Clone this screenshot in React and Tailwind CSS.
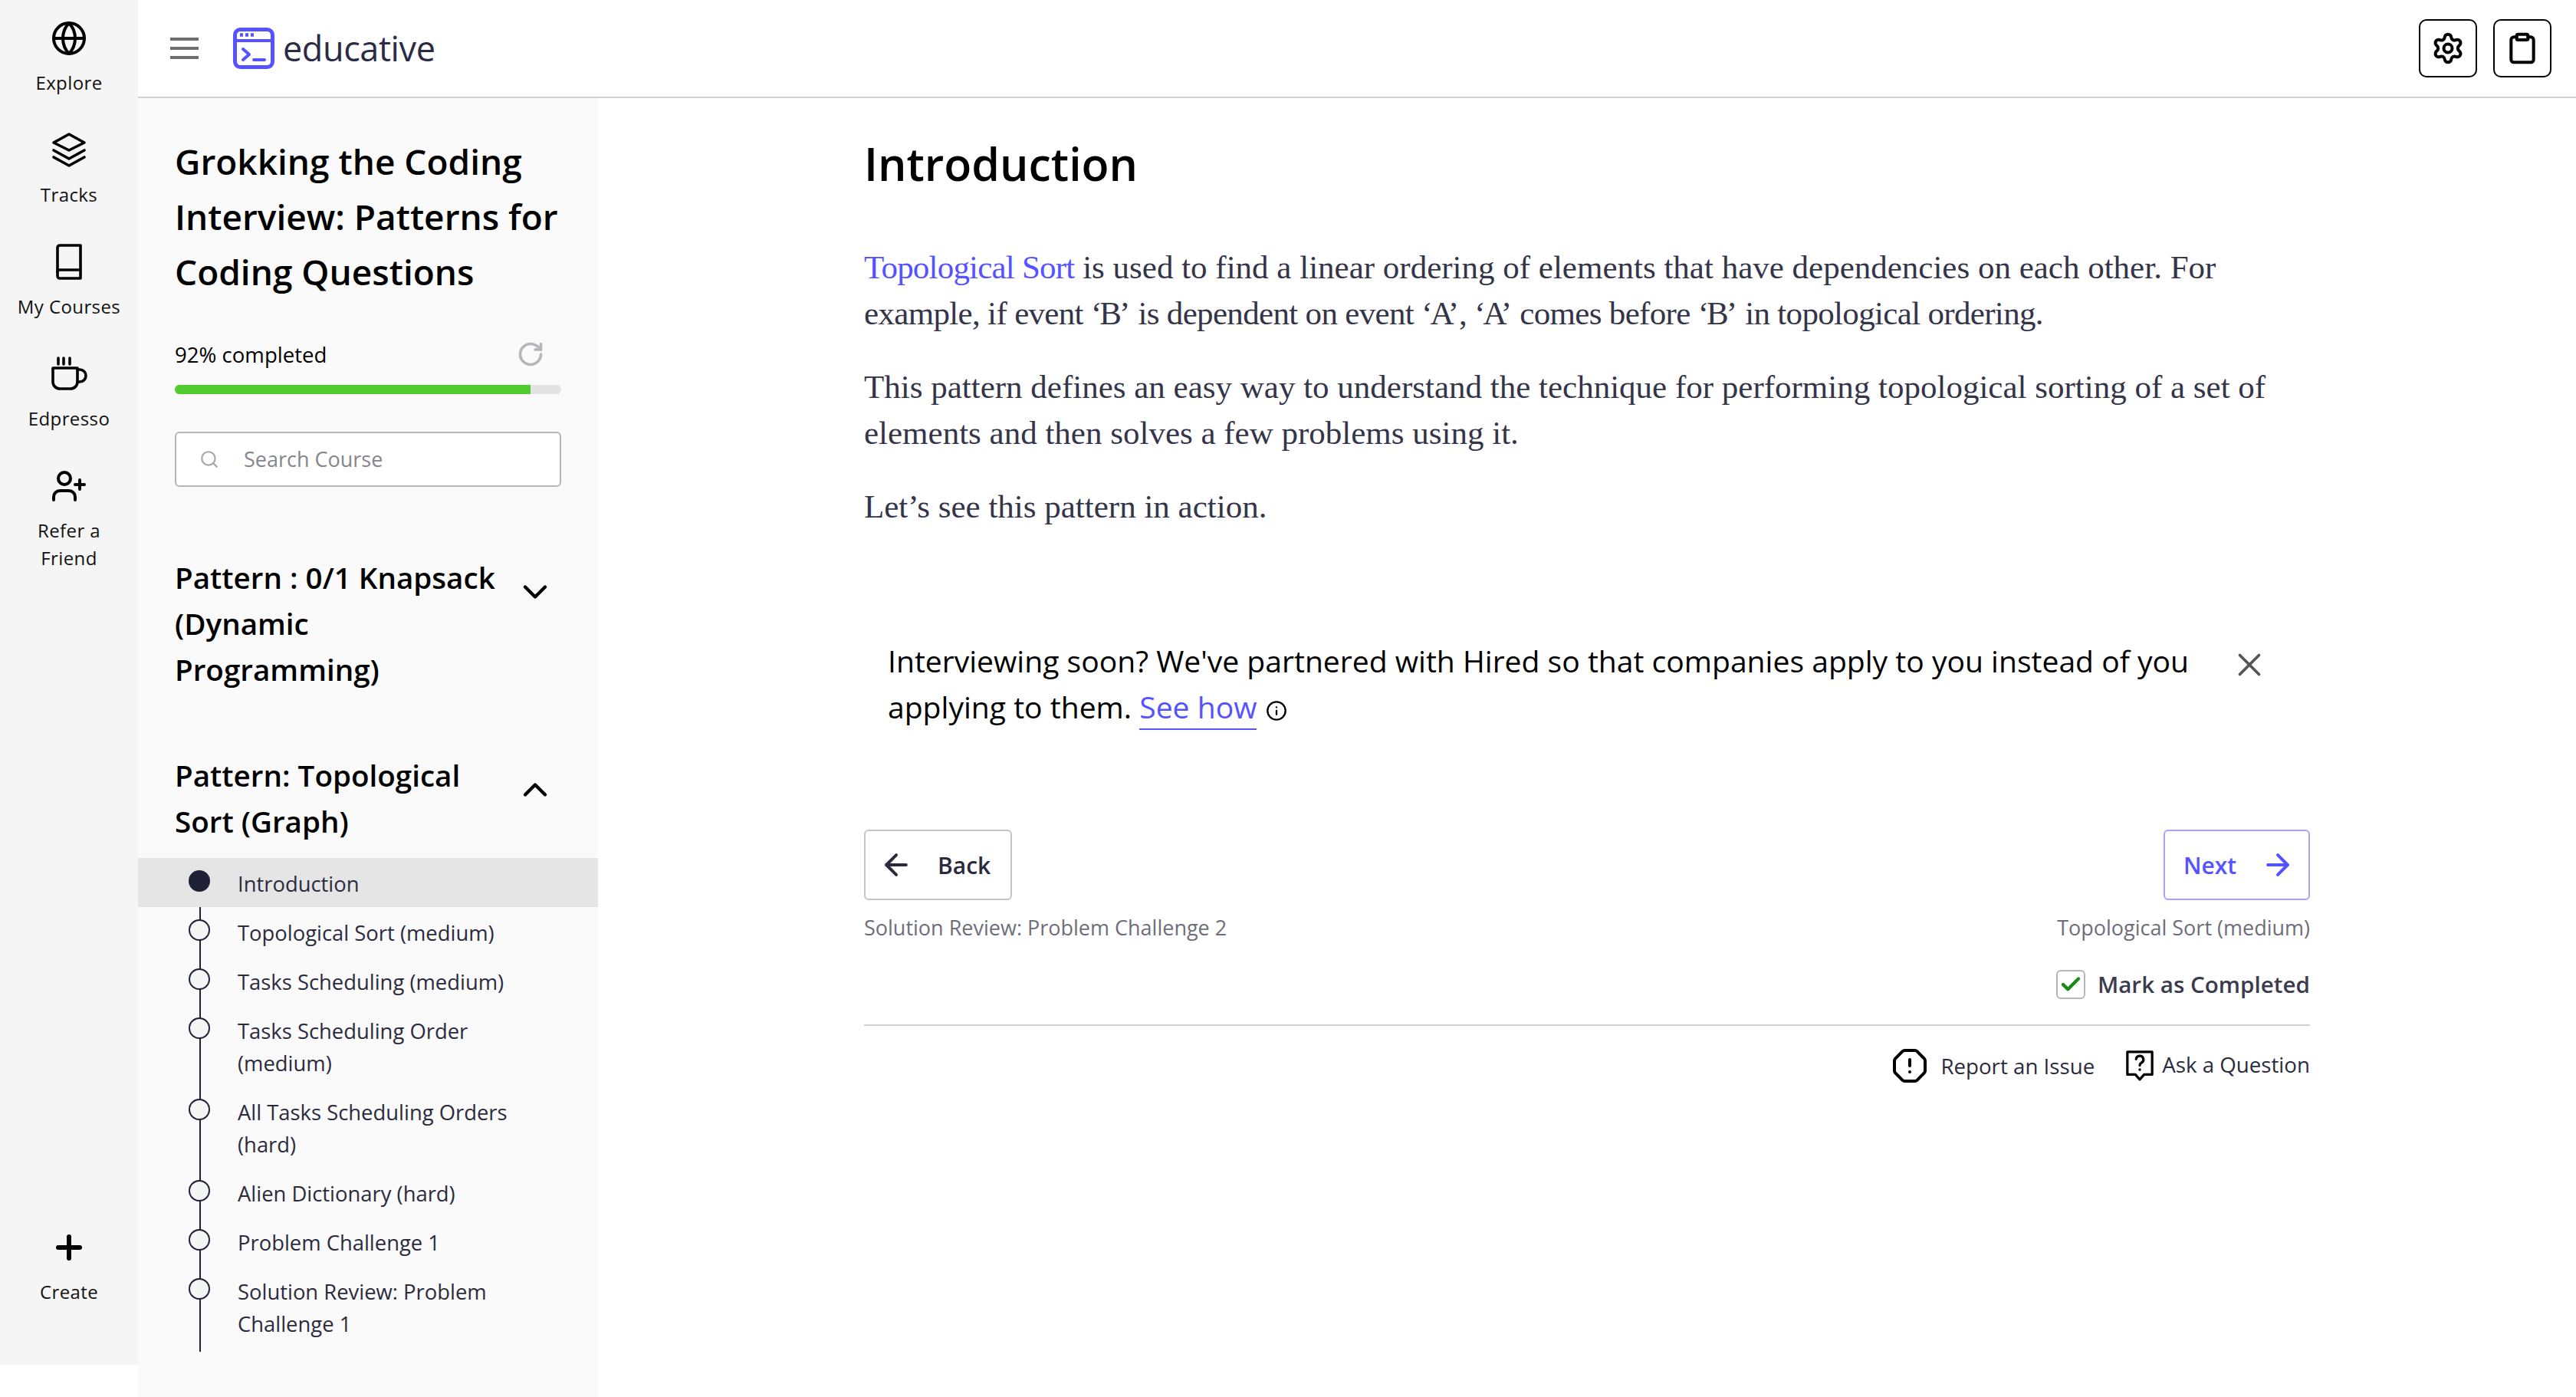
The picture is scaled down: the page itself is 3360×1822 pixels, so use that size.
import React from "react";
import {
  Globe, UserPlus, Plus, Settings, Clipboard, RotateCw, Search,
  ChevronDown, ChevronUp, ArrowLeft, ArrowRight, X, Info, Check, OctagonAlert,
} from "lucide-react";

const sans = "font-['Open_Sans',sans-serif]";

const LayersIcon = ({ className }) => (
  <svg viewBox="0 0 48 48" fill="none" stroke="currentColor" strokeWidth="3.6" strokeLinecap="round" strokeLinejoin="round" className={className}>
    <path d="M24 3l20 11-20 10L4 14z" />
    <path d="M4 24l20 11 20-11" />
    <path d="M4 33l20 11 20-11" />
  </svg>
);

const BookIcon = ({ className }) => (
  <svg viewBox="0 0 48 48" fill="none" stroke="currentColor" strokeWidth="3.6" strokeLinecap="round" strokeLinejoin="round" className={className}>
    <path d="M9 5a3 3 0 0 1 3-3h27v43H12a3 3 0 0 1-3-3z" />
    <path d="M9 37a3 3 0 0 1 3-3h27" />
  </svg>
);

const CupIcon = ({ className }) => (
  <svg viewBox="0 0 48 48" fill="none" stroke="currentColor" strokeWidth="3.6" strokeLinecap="round" strokeLinejoin="round" className={className}>
    <path d="M10 3v8M17 3v8M25 3v8" />
    <path d="M3 16h32v18a9 9 0 0 1-9 9H12a9 9 0 0 1-9-9z" />
    <path d="M35 18h3a8 8 0 0 1 0 16h-3" />
  </svg>
);

const AskIcon = ({ className }) => (
  <svg viewBox="0 0 40 44" fill="none" stroke="currentColor" strokeWidth="3.4" strokeLinejoin="round" strokeLinecap="round" className={className}>
    <path d="M3 3h34v31H26l-6 7-6-7H3z" />
    <path d="M15 13a5 5 0 1 1 7 5c-1.500 .8-2 1.500-2 3.500" />
    <path d="M20 27v.5" />
  </svg>
);

const Logo = () => (
  <svg viewBox="0 0 54 54" fill="none" className="w-[54px] h-[54px] shrink-0">
    <rect x="2.500" y="2.500" width="49" height="49" rx="7" stroke="#5553ff" strokeWidth="5" />
    <path d="M3 17h48" stroke="#5553ff" strokeWidth="4" />
    <path d="M9 9.500h4M16 9.500h4M23 9.500h4" stroke="#5553ff" strokeWidth="4.500" />
    <path d="M13 28l8 7-8 7" stroke="#5553ff" strokeWidth="4" strokeLinecap="round" strokeLinejoin="round" />
    <path d="M27 42h14" stroke="#5553ff" strokeWidth="4" strokeLinecap="round" />
  </svg>
);

function RailItem({ icon: Icon, label, stroke = 2, className = "" }) {
  return (
    <div className={`flex flex-col items-center ${className}`}>
      <Icon className="w-[48px] h-[48px] text-black" strokeWidth={stroke} />
      <span className={`mt-[16px] text-center text-[24px] leading-[36px] tracking-[0.4px] font-medium text-[#111] ${sans}`}>{label}</span>
    </div>
  );
}

const lessons = [
  { title: "Introduction", active: true },
  { title: "Topological Sort (medium)" },
  { title: "Tasks Scheduling (medium)" },
  { title: "Tasks Scheduling Order (medium)" },
  { title: "All Tasks Scheduling Orders (hard)" },
  { title: "Alien Dictionary (hard)" },
  { title: "Problem Challenge 1" },
  { title: "Solution Review: Problem Challenge 1" },
];

function LessonRow({ title, active }) {
  return (
    <div className={`relative pl-[130px] pr-[60px] pt-[13px] pb-[9px] text-[27.4px] leading-[42px] text-[#2b2b3d] ${active ? "bg-[#e5e5e5]" : ""}`}>
      <span className={`absolute left-[66px] top-[16px] w-[28px] h-[28px] rounded-full border-2 border-[#1f2137] ${active ? "bg-[#1f2137]" : "bg-[#f5f5f5]"}`} />
      {title}
    </div>
  );
}

const Q = ({ children }) => <span className="tracking-[-3px] mr-[3px]">{children}</span>;

export default function App() {
  return (
    <div className={`flex w-[3360px] h-[1822px] overflow-hidden bg-white ${sans}`}>
      {/* left rail */}
      <aside className="w-[180px] h-[1780px] shrink-0 bg-[#f5f5f5] flex flex-col pt-[26px] pb-[77px]">
        <RailItem icon={Globe} label="Explore" />
        <RailItem icon={LayersIcon} label="Tracks" className="mt-[46px]" />
        <RailItem icon={BookIcon} label="My Courses" className="mt-[46px]" />
        <RailItem icon={CupIcon} label="Edpresso" className="mt-[46px]" />
        <RailItem icon={UserPlus} label={<>Refer a<br />Friend</>} className="mt-[46px]" />
        <RailItem icon={Plus} stroke={3} label="Create" className="mt-auto" />
      </aside>

      <div className="flex-1 flex flex-col min-w-0">
        {/* top bar */}
        <header className="h-[126px] shrink-0 border-b-2 border-[#d0d0d5] flex items-center pl-[42px] pr-[32px] box-content">
          <div className="flex flex-col gap-[8px] w-[37px]">
            <span className="h-[4px] bg-[#6e6e6e]" />
            <span className="h-[4px] bg-[#6e6e6e]" />
            <span className="h-[4px] bg-[#6e6e6e]" />
          </div>
          <div className="ml-[45px] flex items-center gap-[11px]">
            <Logo />
            <span className="text-[45px] font-medium text-[#2b2b45] tracking-[-0.4px]">educative</span>
          </div>
          <div className="ml-auto flex gap-[21px]">
            <button className="w-[76px] h-[76px] rounded-[10px] border-2 border-black flex items-center justify-center">
              <Settings className="w-[44px] h-[44px] text-black" strokeWidth={2.2} />
            </button>
            <button className="w-[76px] h-[76px] rounded-[10px] border-2 border-black flex items-center justify-center">
              <Clipboard className="w-[44px] h-[44px] text-black" strokeWidth={2.2} />
            </button>
          </div>
        </header>

        <div className="flex-1 flex min-h-0">
          {/* course sidebar */}
          <nav className="w-[600px] shrink-0 bg-[#fafafa] pt-[46px] overflow-hidden">
            <div className="px-[48px]">
              <h2 className="text-[46px] leading-[72px] font-semibold text-black">Grokking the Coding Interview: Patterns for Coding Questions</h2>
              <div className="mt-[52px] flex items-center justify-between pr-[22px]">
                <span className="text-[27.6px] leading-[40px] text-black">92% completed</span>
                <RotateCw className="w-[36px] h-[36px] text-[#b5b5bb]" strokeWidth={2.4} />
              </div>
              <div className="mt-[20px] h-[12px] rounded-full bg-[#e2e2e2] overflow-hidden">
                <div className="h-full w-[92%] bg-[#51cb2f]" />
              </div>
              <div className="mt-[49px] h-[72px] rounded-[6px] border-2 border-[#b5b5bb] flex items-center pl-[30px] bg-white">
                <Search className="w-[26px] h-[26px] text-[#a5a5aa]" strokeWidth={2} />
                <span className="ml-[32px] text-[27px] text-[#85858c]">Search Course</span>
              </div>
              <div className="mt-[88px] flex items-center justify-between pr-[8px]">
                <h3 className="w-[440px] text-[38.6px] leading-[60px] font-semibold text-black">Pattern : 0/1 Knapsack (Dynamic Programming)</h3>
                <ChevronDown className="w-[52px] h-[52px] mb-[82px] text-black" strokeWidth={2} />
              </div>
              <div className="mt-[78px] flex items-center justify-between pr-[8px]">
                <h3 className="w-[440px] text-[38.6px] leading-[60px] font-semibold text-black">Pattern: Topological Sort (Graph)</h3>
                <ChevronUp className="w-[52px] h-[52px] mb-[22px] text-black" strokeWidth={2} />
              </div>
            </div>
            <div className="relative mt-[18px]">
              <span className="absolute left-[80px] top-[30px] bottom-[-6px] w-[2px] bg-[#1f2137]" />
              {lessons.map((l) => <LessonRow key={l.title} {...l} />)}
            </div>
          </nav>

          {/* lesson */}
          <main className="flex-1 pl-[347px] pr-[347px] min-w-0">
            <h1 className="mt-[45px] text-[59px] leading-[80px] font-semibold text-black">Introduction</h1>
            <div className="mt-[66px] font-['Liberation_Serif',serif] text-[43px] leading-[60px] text-[#35354a]">
              <p>
                <span className="text-[#5553ff] tracking-[-0.8px]">Topological Sort</span> is used to find a linear ordering of elements that have dependencies on each other. For{" "}
                <span className="tracking-[-0.67px]">example, if event <Q>‘B’</Q> is dependent on event <Q>‘A’</Q>, <Q>‘A’</Q> comes before <Q>‘B’</Q> in topological ordering.</span>
              </p>
              <p className="mt-[36px]">This pattern defines an easy way to understand the technique for performing topological sorting of a set of elements and then solves a few problems using it.</p>
              <p className="mt-[36px]">Let’s see this pattern in action.</p>
            </div>

            <div className="mt-[141px] pl-[31px] flex items-start text-[39.1px] leading-[60px] text-black">
              <p className="w-[1710px]">
                Interviewing soon? We've partnered with Hired so that companies apply to you instead of you applying to them.{" "}
                <span className="text-[#5553ff] border-b-2 border-[#5553ff] pb-[2px]">See how</span>
                <Info className="inline w-[28px] h-[28px] ml-[12px] text-black" strokeWidth={2} />
              </p>
              <X className="ml-[41px] mt-[10px] w-[50px] h-[50px] text-[#555]" strokeWidth={1.8} />
            </div>

            <div className="mt-[130px] flex justify-between">
              <button className="h-[92px] w-[193px] rounded-[6px] border-2 border-[#c5c5c5] flex items-center pl-[18px] text-[30px] font-semibold text-[#2b2b3d]">
                <ArrowLeft className="w-[44px] h-[44px]" strokeWidth={2.2} />
                <span className="ml-[32px]">Back</span>
              </button>
              <button className="h-[92px] w-[191px] rounded-[6px] border-2 border-[#a5a4ff] flex items-center pl-[24px] text-[30px] font-semibold text-[#5553ff]">
                <span>Next</span>
                <ArrowRight className="ml-[32px] w-[44px] h-[44px]" strokeWidth={2.2} />
              </button>
            </div>
            <div className="mt-[16px] flex justify-between text-[27px] leading-[40px] text-[#6e6e7a]">
              <span>Solution Review: Problem Challenge 2</span>
              <span>Topological Sort (medium)</span>
            </div>
            <div className="mt-[34px] flex justify-end items-center gap-[16px]">
              <span className="w-[38px] h-[38px] rounded-[6px] border-2 border-[#b5b5bb] flex items-center justify-center">
                <Check className="w-[30px] h-[30px] text-[#1a8a1a]" strokeWidth={3.5} />
              </span>
              <span className="text-[29.6px] leading-[40px] font-semibold text-[#3b3b50]">Mark as Completed</span>
            </div>
            <div className="mt-[32px] h-[2px] bg-[#d0d0d5]" />
            <div className="mt-[28px] flex justify-end items-center text-[27.7px] leading-[40px] text-[#2b2b3d]">
              <OctagonAlert className="w-[48px] h-[48px] text-black" strokeWidth={2} />
              <span className="ml-[16px]">Report an Issue</span>
              <AskIcon className="ml-[40px] w-[38px] h-[44px] text-black" />
              <span className="ml-[10px] mb-[4px]">Ask a Question</span>
            </div>
          </main>
        </div>
      </div>
    </div>
  );
}
